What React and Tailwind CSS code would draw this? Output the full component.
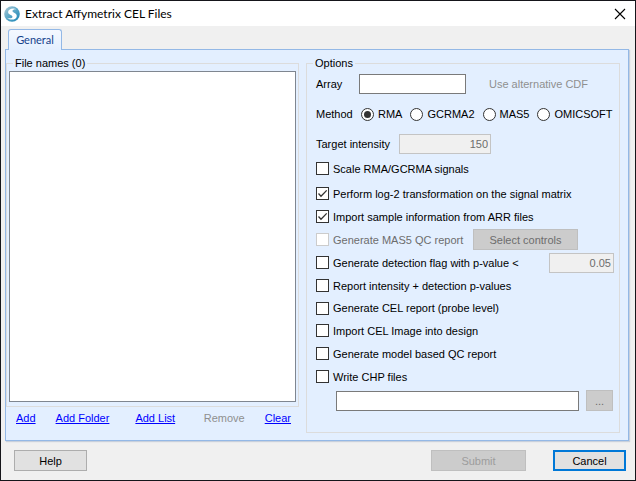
import React from "react";

const field = "h-5 border border-[#7a7a7a] bg-white px-1 outline-none";
const disabledField = "h-5 border border-[#c4c4c4] bg-[#f0f0f0] pl-1 pr-[2px] text-right text-[#6d6d6d] outline-none";
const disabledButton = "h-[21px] border border-[#bfbfbf] bg-[#cccccc] text-center";

function CheckRow({ label, checked = false, disabled = false, height = "h-[23px]", children }) {
  return (
    <div className={"flex items-center " + height}>
      <label className={"flex items-center gap-1 " + (disabled ? "text-[#6d6d6d]" : "")}>
        <span className="grid size-[13px] shrink-0">
          <input
            type="checkbox"
            defaultChecked={checked}
            disabled={disabled}
            className="peer col-start-1 row-start-1 size-[13px] appearance-none border border-[#333333] bg-white disabled:border-[#cccccc]"
          />
          <svg viewBox="0 0 13 13" className="pointer-events-none invisible col-start-1 row-start-1 size-[13px] peer-checked:visible">
            <path d="M2.5 6.5 5 9.2 10.7 3.4" fill="none" stroke="#333333" strokeWidth="1.3" />
          </svg>
        </span>
        <span className="whitespace-nowrap">{label}</span>
      </label>
      {children}
    </div>
  );
}

function Radio({ label, checked = false }) {
  return (
    <label className="flex items-center gap-1">
      <span className="grid size-[13px] shrink-0 place-items-center">
        <input
          type="radio"
          name="method"
          defaultChecked={checked}
          className="peer col-start-1 row-start-1 size-[13px] appearance-none rounded-full border border-[#333333] bg-white"
        />
        <span className="pointer-events-none invisible col-start-1 row-start-1 size-[7px] rounded-full bg-[#333333] peer-checked:visible" />
      </span>
      <span>{label}</span>
    </label>
  );
}

function Logo() {
  return (
    <svg viewBox="0 0 16 16" className="size-4 shrink-0">
      <defs>
        <linearGradient id="orb" x1="0" y1="0" x2="1" y2="1">
          <stop offset="0" stopColor="#b5cbd6" />
          <stop offset="0.45" stopColor="#5fa9c8" />
          <stop offset="1" stopColor="#1683b5" />
        </linearGradient>
      </defs>
      <circle cx="8" cy="8" r="7.8" fill="url(#orb)" />
      <path
        d="M13 3.4C9.6 1.6 4.3 2.6 4.1 6C4 8.9 8.6 8.8 8.5 10.8C8.4 12.4 5.6 12.8 3 11.7C6.4 15 12.8 13.8 12.8 10C12.8 7 8.3 6.9 8.4 5.1C8.5 3.7 10.6 3.1 13 3.4Z"
        fill="#ffffff"
      />
    </svg>
  );
}

export default function App() {
  return (
    <div className="flex min-h-screen w-full flex-col border border-[#15151a] bg-[#f0f0f0] font-['Liberation_Sans',Arial,sans-serif] text-[11px] leading-4 text-black">
      <header className="flex h-[25px] items-center gap-[5px] bg-white pl-[3px] pr-[9px]">
        <Logo />
        <h1 className="font-[Lato,sans-serif] text-[12px]">Extract Affymetrix CEL Files</h1>
        <button aria-label="Close" className="ml-auto size-3">
          <svg viewBox="0 0 12 12" className="size-3">
            <path d="M1 1 11 11M11 1 1 11" stroke="#000000" strokeWidth="1.1" />
          </svg>
        </button>
      </header>

      <nav className="flex px-[7px] pt-[3px]">
        <button className="z-10 -mb-px h-[21px] w-[54px] rounded-t-[3px] border border-b-0 border-[#93b8e6] bg-linear-to-b from-[#f4f8ff] to-[#e3efff] font-[Lato,sans-serif] text-[11px] text-[#15428b]">
          General
        </button>
      </nav>

      <main className="ml-1 mr-[6px] flex grow gap-[7px] border border-[#93b8e6] bg-[#e3efff] pb-[7px] pr-2 pt-[5px] shadow-[1px_1px_1px_#c8d0dc]">
        <section className="flex w-[293px] shrink-0 flex-col pb-1">
          <fieldset className="flex grow flex-col border border-[#dcdcdc] px-[2px] pb-1">
            <legend className="ml-[4px] h-4 px-[2px]">File names (0)</legend>
            <div role="listbox" aria-label="File names" className="grow border border-[#7f8690] bg-white" />
          </fieldset>
          <div className="flex h-[22px] items-center pl-[10px] pr-2 text-[#0000ff]">
            <a href="#add" className="mr-5 underline">Add</a>
            <a href="#folder" className="mr-[26px] underline">Add Folder</a>
            <a href="#list" className="underline">Add List</a>
            <button disabled className="ml-auto mr-5 text-[#8f8f8f]">Remove</button>
            <a href="#clear" className="underline">Clear</a>
          </div>
        </section>

        <fieldset className="min-w-0 grow border border-[#dcdcdc] pb-[21px] pl-[9px] pr-[5px]">
          <legend className="-ml-[3px] h-4 px-[2px]">Options</legend>
          <div className="flex flex-col">
            <div className="mt-[3px] flex h-5 items-center">
              <label htmlFor="array" className="w-[43px] shrink-0">Array</label>
              <input id="array" className={field + " w-[107px]"} />
              <span className="ml-[23px] whitespace-nowrap text-[#8f8f8f]">Use alternative CDF</span>
            </div>
            <div role="radiogroup" aria-label="Method" className="mt-[10px] flex h-5 items-center">
              <span className="w-[45px] shrink-0">Method</span>
              <div className="flex gap-2">
                <Radio label="RMA" checked />
                <Radio label="GCRMA2" />
                <Radio label="MAS5" />
                <Radio label="OMICSOFT" />
              </div>
            </div>
            <div className="mt-[10px] flex h-5 items-center">
              <label htmlFor="target" className="w-[83px] shrink-0">Target intensity</label>
              <input id="target" disabled defaultValue="150" className={disabledField + " w-[92px]"} />
            </div>
            <div className="mt-[3px] flex flex-col">
              <CheckRow label="Scale RMA/GCRMA signals" />
            </div>
            <div className="mt-[2px] flex flex-col">
              <CheckRow label="Perform log-2 transformation on the signal matrix" checked />
              <CheckRow label="Import sample information from ARR files" checked />
              <CheckRow label="Generate MAS5 QC report" disabled>
                <button disabled className={disabledButton + " ml-auto mr-9 w-[105px] text-[#6d6d6d]"}>Select controls</button>
              </CheckRow>
              <CheckRow label="Generate detection flag with p-value <">
                <input aria-label="P-value threshold" disabled defaultValue="0.05" className={disabledField + " ml-auto w-[65px]"} />
              </CheckRow>
              <CheckRow label="Report intensity + detection p-values" />
              <CheckRow label="Generate CEL report (probe level)" height="h-[22px]" />
              <CheckRow label="Import CEL Image into design" />
              <CheckRow label="Generate model based QC report" />
              <CheckRow label="Write CHP files" />
            </div>
            <div className="mt-[2px] flex items-end gap-[7px] pl-5 pr-px">
              <input aria-label="CHP folder" className={field + " min-w-0 grow"} />
              <button disabled className={disabledButton + " w-[27px] text-[#6d6d6d]"}>...</button>
            </div>
          </div>
        </fieldset>
      </main>

      <footer className="flex h-[39px] items-center pl-[13px] pr-[9px]">
        <button className="h-[21px] w-[73px] border border-[#adadad] bg-[#e1e1e1]">Help</button>
        <button disabled className={disabledButton + " ml-auto mr-[27px] w-[95px] text-[#9c9c9c]"}>Submit</button>
        <button className="h-[21px] w-[73px] border-2 border-[#0078d7] bg-[#e1e1e1]">Cancel</button>
      </footer>
    </div>
  );
}
